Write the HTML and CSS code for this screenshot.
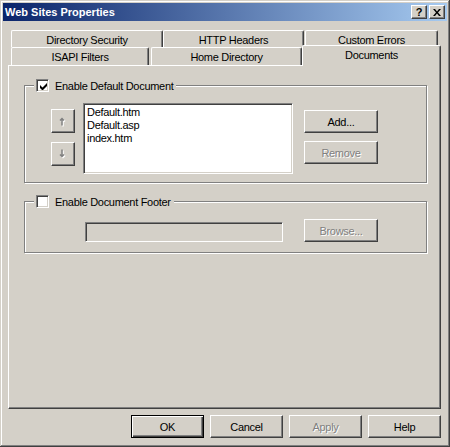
FILE: index.html
```html
<!DOCTYPE html>
<html>
<head>
<meta charset="utf-8">
<title>Web Sites Properties</title>
<link rel="stylesheet" href="styles.css">
</head>
<body>
<div class="window">
  <div class="titlebar">
    <span class="title">Web Sites Properties</span>
    <div class="tb-btns">
      <span class="tbtn help">?</span>
      <span class="tbtn close"><svg width="8" height="7" viewBox="0 0 8 7"><path d="M0 0h2l2 2.5L6 0h2L5 3.5 8 7H6L4 4.5 2 7H0l3-3.5z" fill="#000"/></svg></span>
    </div>
  </div>
  <div class="body">
    <div class="tabs">
      <div class="tabrow row1">
        <div class="tab t-ds">Directory Security</div>
        <div class="tab t-http">HTTP Headers</div>
        <div class="tab t-ce">Custom Errors</div>
      </div>
      <div class="tabrow row2">
        <div class="tab t-isapi">ISAPI Filters</div>
        <div class="tab t-home">Home Directory</div>
        <div class="tab t-doc sel">Documents</div>
      </div>
    </div>
    <div class="panel">
      <fieldset class="group g1">
        <legend><span class="check on"><svg width="7" height="7" viewBox="0 0 7 7"><path d="M0 2v3l2 2h1l4-4V0L2.5 4.5z" fill="#000"/></svg></span><span class="lbl">Enable Default Document</span></legend>
        <div class="g1-row">
          <div class="arrows">
            <span class="btn sq"><svg width="8" height="11" viewBox="0 0 8 11"><path d="M3 9.5v-7M1 4.5l2-2 2 2" stroke="#fff" stroke-width="1.5" fill="none" transform="translate(1,1)"/><path d="M3 9.5v-7M1 4.5l2-2 2 2" stroke="#808080" stroke-width="1.5" fill="none"/></svg></span>
            <span class="btn sq"><svg width="8" height="11" viewBox="0 0 8 11"><path d="M3 0.5v7M1 5.5l2 2 2-2" stroke="#fff" stroke-width="1.5" fill="none" transform="translate(1,1)"/><path d="M3 0.5v7M1 5.5l2 2 2-2" stroke="#808080" stroke-width="1.5" fill="none"/></svg></span>
          </div>
          <div class="listbox">
            <div class="item">Default.htm</div>
            <div class="item">Default.asp</div>
            <div class="item">index.htm</div>
          </div>
          <div class="side">
            <span class="btn wide">Add...</span>
            <span class="btn wide dis">Remove</span>
          </div>
        </div>
      </fieldset>
      <fieldset class="group g2">
        <legend><span class="check"></span><span class="lbl">Enable Document Footer</span></legend>
        <div class="g2-row">
          <span class="textbox"></span>
          <span class="btn wide dis">Browse...</span>
        </div>
      </fieldset>
    </div>
    <div class="buttons">
      <span class="btn dlg def">OK</span>
      <span class="btn dlg">Cancel</span>
      <span class="btn dlg dis">Apply</span>
      <span class="btn dlg">Help</span>
    </div>
  </div>
</div>
</body>
</html>
```

FILE: styles.css
```css
html, body {
  margin: 0;
  padding: 0;
  background: #d4d0c8;
}
.window {
  width: 450px;
  height: 447px;
  box-sizing: border-box;
  padding: 3px;
  background: #d4d0c8;
  box-shadow: inset -1px -1px 0 #404040, inset 1px 1px 0 #d4d0c8, inset -2px -2px 0 #808080, inset 2px 2px 0 #fff;
  font: 11px "Liberation Sans", Arial, sans-serif;
  letter-spacing: -0.3px;
  color: #000;
}
.titlebar {
  height: 18px;
  display: flex;
  align-items: center;
  justify-content: space-between;
  padding: 0 2px 0 2px;
  background: linear-gradient(to right, #0a246a, #a6caf0);
}
.title {
  color: #fff;
  font-weight: bold;
  font-size: 11px;
  letter-spacing: 0;
}
.tb-btns {
  display: flex;
  gap: 2px;
}
.tbtn {
  width: 16px;
  height: 14px;
  box-sizing: border-box;
  display: flex;
  align-items: center;
  justify-content: center;
  background: #d4d0c8;
  border: 1px solid;
  border-color: #fff #404040 #404040 #fff;
  box-shadow: inset -1px -1px 0 #808080;
  font-weight: bold;
  font-size: 11px;
  letter-spacing: 0;
  line-height: 1;
}
.body {
  padding: 9px 6px 0 5px;
}
.tabs {
  padding-left: 3px;
}
.tabrow {
  display: flex;
  align-items: flex-end;
}
.row1 { height: 17px; }
.row2 { height: 18px; }
.tab {
  box-sizing: border-box;
  height: 100%;
  display: flex;
  align-items: center;
  justify-content: center;
  background: #d4d0c8;
  border-top: 1px solid #fff;
  border-left: 1px solid #fff;
  border-right: 1px solid #404040;
  box-shadow: inset -1px 0 0 #808080;
  border-radius: 2px 2px 0 0;
  padding-top: 1px;
}
.t-ds { width: 152px; }
.t-http { width: 141px; }
.t-ce { width: 133px; margin-left: 1px; }
.t-isapi { width: 138px; }
.t-home { width: 151px; margin-left: 2px; }
.t-doc { width: 139px; }
.tab.sel {
  height: 21px;
  margin-bottom: -1px;
  padding-bottom: 3px;
  position: relative;
  z-index: 1;
}
.panel {
  height: 344px;
  box-sizing: border-box;
  border: 1px solid;
  border-color: #fff #404040 #404040 #fff;
  box-shadow: inset -1px -1px 0 #808080;
  padding: 13px 0 0 15px;
}
.group {
  margin: 0;
  width: 403px;
  box-sizing: border-box;
  border: 1px solid #808080;
  box-shadow: 1px 1px 0 #fff, inset 1px 1px 0 #fff;
  padding: 11px 0 8px 0;
}
.group legend {
  display: flex;
  align-items: center;
  gap: 6px;
  margin-left: 9px;
  padding: 0 3px 0 2px;
  background: #d4d0c8;
  height: 13px;
}
.check {
  width: 13px;
  height: 13px;
  box-sizing: border-box;
  background: #fff;
  border: 1px solid;
  border-color: #808080 #fff #fff #808080;
  box-shadow: inset 1px 1px 0 #404040, inset -1px -1px 0 #d4d0c8;
  display: flex;
  align-items: center;
  justify-content: center;
  padding: 1px 0 0 1px;
}
.check svg { display: block; }
.g1-row {
  display: flex;
  align-items: flex-start;
}
.arrows {
  display: flex;
  flex-direction: column;
  gap: 9px;
  margin: 6px 8px 0 26px;
}
.btn {
  box-sizing: border-box;
  display: flex;
  align-items: center;
  justify-content: center;
  background: #d4d0c8;
  border: 1px solid;
  border-color: #fff #404040 #404040 #fff;
  box-shadow: inset -1px -1px 0 #808080;
}
.btn.sq {
  width: 24px;
  height: 24px;
}
.btn.sq svg { display: block; }
.listbox {
  width: 210px;
  height: 71px;
  box-sizing: border-box;
  background: #fff;
  border: 1px solid;
  border-color: #808080 #fff #fff #808080;
  box-shadow: inset 1px 1px 0 #404040, inset -1px -1px 0 #d4d0c8;
  padding: 2px 0 0 3px;
}
.item {
  height: 13px;
  line-height: 13px;
}
.side {
  display: flex;
  flex-direction: column;
  gap: 8px;
  margin: 7px 0 0 11px;
}
.btn.wide {
  width: 74px;
  height: 23px;
}
.dis {
  color: #808080;
  text-shadow: 1px 1px 0 #fff;
}
.g2 {
  margin-top: 12px;
  padding: 11px 0 10px 0;
}
.g2-row {
  display: flex;
  align-items: flex-start;
}
.textbox {
  margin: 3px 21px 0 60px;
  width: 198px;
  height: 20px;
  box-sizing: border-box;
  background: #d4d0c8;
  border: 1px solid;
  border-color: #808080 #fff #fff #808080;
  box-shadow: inset 1px 1px 0 #404040, inset -1px -1px 0 #d4d0c8;
}
.buttons {
  display: flex;
  justify-content: flex-end;
  gap: 6px;
  margin-top: 6px;
}
.btn.dlg {
  width: 73px;
  height: 23px;
}
.btn.def {
  border: 1px solid #000;
  box-shadow: inset 1px 1px 0 #fff, inset -1px -1px 0 #404040, inset -2px -2px 0 #808080;
}
```
